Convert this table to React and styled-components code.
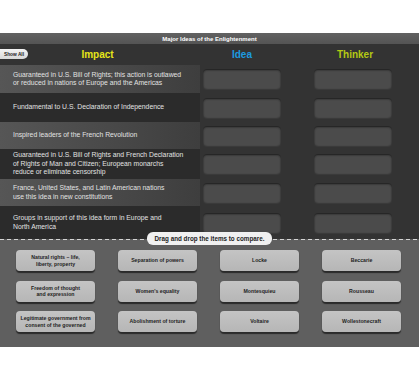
import React from 'react';
import styled, { createGlobalStyle } from 'styled-components';

const GlobalStyle = createGlobalStyle`
  body {
    margin: 0;
    background: #ffffff;
    font-family: "Liberation Sans", Arial, sans-serif;
  }
`;

const Page = styled.div`
  width: 420px;
  height: 383px;
  padding-top: 33px;
  box-sizing: border-box;
`;

const Panel = styled.div`
  width: 419px;
  height: 314px;
  background: #333333;
  display: flex;
  flex-direction: column;
`;

const TitleBar = styled.div`
  height: 11px;
  background: linear-gradient(#626262, #545454);
  color: #ffffff;
  font-size: 6px;
  font-weight: bold;
  display: flex;
  align-items: center;
  justify-content: center;
`;

const Header = styled.div`
  height: 21px;
  display: flex;
  align-items: center;
  position: relative;
`;

const ShowAll = styled.button`
  position: absolute;
  left: 0;
  top: 5px;
  width: 28px;
  height: 10px;
  padding: 0;
  border: none;
  border-radius: 0 5px 5px 0;
  background: linear-gradient(#f4f4f4, #d8d8d8);
  color: #222;
  font-family: "Liberation Sans", Arial, sans-serif;
  font-size: 4.8px;
  font-weight: bold;
`;

const HeadCell = styled.div`
  width: ${(p) => p.w}px;
  margin-left: ${(p) => p.ml || 0}px;
  text-align: center;
  color: ${(p) => p.color};
  font-size: 10px;
  font-weight: bold;
`;

const Row = styled.div`
  height: ${(p) => p.h}px;
  display: flex;
  align-items: center;
`;

const RowText = styled.div`
  width: 200px;
  height: 100%;
  box-sizing: border-box;
  padding: 0 4px 0 13px;
  display: flex;
  align-items: center;
  white-space: pre-line;
  color: #e2e2e2;
  font-size: 6.8px;
  line-height: 8.5px;
  background: ${(p) =>
    p.light ? 'linear-gradient(90deg, #565656, #3e3e3e)' : '#2b2b2b'};
`;

const Slot = styled.div`
  width: 78px;
  height: 20px;
  margin-left: ${(p) => p.ml}px;
  border-radius: 4px;
  background: #4b4b4b;
  box-shadow: inset 0 1px 2px #1a1a1a, 0 1px 0 #3a3a3a;
`;

const Tray = styled.div`
  flex: 1;
  position: relative;
  background: #5f5f5f;
  padding: 11px 0 0 16px;

  &::before {
    content: '';
    position: absolute;
    top: 0;
    left: 0;
    right: 0;
    height: 1px;
    background: repeating-linear-gradient(90deg, #d4d4d4 0 4px, transparent 4px 7px);
  }
`;

const DragLabel = styled.div`
  position: absolute;
  top: -7px;
  left: 147px;
  width: 125px;
  height: 13px;
  border-radius: 6px;
  background: #f0f0f0;
  color: #222;
  font-size: 6.3px;
  font-weight: bold;
  display: flex;
  align-items: center;
  justify-content: center;
  z-index: 1;
`;

const TileGrid = styled.div`
  display: grid;
  grid-template-columns: repeat(4, 79px);
  grid-template-rows: repeat(3, 21px);
  grid-auto-flow: column;
  column-gap: 23px;
  row-gap: 9.5px;
`;

const Tile = styled.div`
  border-radius: 4px;
  background: linear-gradient(#c4c4c4, #b6b6b6);
  box-shadow: 0 1.5px 1px #2a2a2a;
  color: #1e1e1e;
  font-size: 5.2px;
  font-weight: bold;
  line-height: 6.5px;
  text-align: center;
  white-space: pre-line;
  display: flex;
  align-items: center;
  justify-content: center;
`;

const rows = [
  { h: 28, text: 'Guaranteed in U.S. Bill of Rights; this action is outlawed\nor reduced in nations of Europe and the Americas' },
  { h: 29, text: 'Fundamental to U.S. Declaration of Independence' },
  { h: 27, text: 'Inspired leaders of the French Revolution' },
  { h: 30, text: 'Guaranteed in U.S. Bill of Rights and French Declaration\nof Rights of Man and Citizen; European monarchs\nreduce or eliminate censorship' },
  { h: 27, text: 'France, United States, and Latin American nations\nuse this idea in new constitutions' },
  { h: 33, text: 'Groups in support of this idea form in Europe and\nNorth America' },
];

const tiles = [
  'Natural rights \u2013 life,\nliberty, property',
  'Freedom of thought\nand expression',
  'Legitimate government from\nconsent of the governed',
  'Separation of powers',
  "Women's equality",
  'Abolishment of torture',
  'Locke',
  'Montesquieu',
  'Voltaire',
  'Beccarie',
  'Rousseau',
  'Wollestonecraft',
];

function App() {
  return (
    <Page>
      <GlobalStyle />
      <Panel>
        <TitleBar>Major Ideas of the Enlightenment</TitleBar>
        <Header>
          <ShowAll>Show All</ShowAll>
          <HeadCell w={195} color="#e6e619">Impact</HeadCell>
          <HeadCell w={84} ml={5} color="#1c9be0">Idea</HeadCell>
          <HeadCell w={78} ml={32} color="#b3c914">Thinker</HeadCell>
        </Header>
        {rows.map((r, i) => (
          <Row key={i} h={r.h}>
            <RowText light={i % 2 === 0}>{r.text}</RowText>
            <Slot ml={3} />
            <Slot ml={33} />
          </Row>
        ))}
        <Tray>
          <DragLabel>Drag and drop the items to compare.</DragLabel>
          <TileGrid>
            {tiles.map((t) => (
              <Tile key={t}>{t}</Tile>
            ))}
          </TileGrid>
        </Tray>
      </Panel>
    </Page>
  );
}

export default App;
